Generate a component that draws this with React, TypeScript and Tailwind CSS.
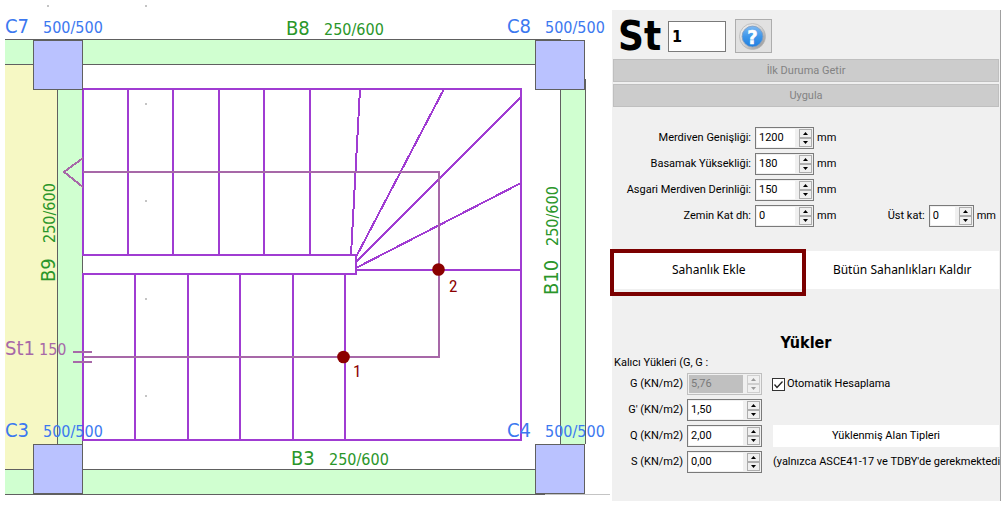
import { useId, useState } from 'react';

const BEAM = '#d0ffd0';
const OUTLINE = '#606060';
const STAIR = '#a03cd2';
const PATH = '#a768a8';

const columns = [
  { x: 33, y: 40 },
  { x: 535, y: 40 },
  { x: 33, y: 444 },
  { x: 535, y: 444 },
];

const columnLabels = [
  { name: 'C7', x: 5, y: 33 },
  { name: 'C8', x: 507, y: 33 },
  { name: 'C3', x: 5, y: 437 },
  { name: 'C4', x: 507, y: 437 },
];

const gridDots = [
  [48, 6],
  [146, 6],
  [146, 104],
  [146, 201],
  [146, 299],
  [146, 396],
];

function Plan() {
  return (
    <svg viewBox="0 0 612 507" className="block w-full font-['DejaVu_Sans_Condensed','DejaVu_Sans',sans-serif] font-stretch-condensed" role="img">
      {/* slab and beams */}
      <g shapeRendering="crispEdges">
        <rect x="5" y="65" width="53" height="405" fill="#f6f8c4" />
        <rect x="58" y="65" width="25" height="405" fill={BEAM} />
        <rect x="83" y="65" width="477" height="405" fill="#fff" />
        <rect x="561" y="80" width="24" height="364" fill={BEAM} />
        <rect x="5" y="40" width="555" height="24" fill={BEAM} />
        <rect x="5" y="470" width="539" height="24" fill={BEAM} />
        <path
          d="M5 39.5H561M5 64.5H535M57.5 89V444M82.5 89V444M560.5 89V444M585.5 79V444M5 469.5H535M5 494.5H545"
          stroke={OUTLINE}
          fill="none"
        />
        <path d="M545 494.5H610" stroke="#c4c4c4" />
        {gridDots.map(([x, y]) => (
          <rect key={`${x}-${y}`} x={x - 1} y={y - 1} width="2" height="2" fill="#c4c4c4" />
        ))}
      </g>

      {/* stair */}
      <g stroke={STAIR} strokeWidth="2" fill="none" shapeRendering="crispEdges">
        <path d="M83 255V89H521V440H83V274" />
        <path d="M82 255H356V274H82" />
        <path d="M128 89V255M173 89V255M219 89V255M264 89V255M310 89V255" />
        <path d="M135 274V440M188 274V440M240 274V440M293 274V440M345 274V440" />
        <path d="M356 270H521" />
        <path d="M360 89L351 255M444 89L356 257M521 97L356 262M521 183L356 268" />
      </g>

      {/* walking line */}
      <g stroke={PATH} strokeWidth="2" fill="none" shapeRendering="crispEdges">
        <path d="M83 172H439V357H83" />
        <path d="M83 158L64 172L83 187" />
        <path d="M73 352H92M73 362H92" />
      </g>

      <g fill="#bac2ff" stroke={OUTLINE} shapeRendering="crispEdges">
        {columns.map((c) => (
          <rect key={`${c.x}-${c.y}`} x={c.x + 0.5} y={c.y + 0.5} width="49" height="49" />
        ))}
      </g>

      <g fill="#3c78f0">
        {columnLabels.map((c) => (
          <g key={c.name}>
            <text x={c.x} y={c.y} fontSize="20">{c.name}</text>
            <text x={c.x + 38} y={c.y} fontSize="16">500/500</text>
          </g>
        ))}
      </g>

      <g fill="#2a962a">
        <text x="286" y="35" fontSize="20">B8</text>
        <text x="324" y="35" fontSize="16">250/600</text>
        <text x="291" y="465" fontSize="20">B3</text>
        <text x="329" y="465" fontSize="16">250/600</text>
        <g transform="translate(55 282) rotate(-90)">
          <text fontSize="20">B9</text>
          <text x="39" fontSize="16">250/600</text>
        </g>
        <g transform="translate(558 295) rotate(-90)">
          <text fontSize="20">B10</text>
          <text x="49" fontSize="16">250/600</text>
        </g>
      </g>

      <g fill={PATH}>
        <text x="5" y="355" fontSize="20">St1</text>
        <text x="39" y="355" fontSize="16">150</text>
      </g>

      {/* landing points */}
      <g fill="#8b0000" className="font-[Roboto,sans-serif]" fontSize="17">
        <circle cx="438.5" cy="269.5" r="6.3" />
        <text x="449" y="292">2</text>
        <circle cx="343.5" cy="357" r="6.3" />
        <text x="353" y="377">1</text>
      </g>
    </svg>
  );
}

function HelpIcon() {
  return (
    <svg width="29" height="29" viewBox="0 0 29 29" aria-hidden="true">
      <defs>
        <linearGradient id="ring" x1="0" y1="0" x2="1" y2="1">
          <stop offset="0" stopColor="#f4f4f4" />
          <stop offset="0.5" stopColor="#d2d2d2" />
          <stop offset="1" stopColor="#8c8c8c" />
        </linearGradient>
        <linearGradient id="ball" x1="0" y1="0" x2="0" y2="1">
          <stop offset="0" stopColor="#7db9f2" />
          <stop offset="0.5" stopColor="#3f97ea" />
          <stop offset="1" stopColor="#1f7fe0" />
        </linearGradient>
      </defs>
      <circle cx="13.5" cy="14.5" r="13" fill="url(#ring)" stroke="#b8b8b8" strokeWidth="0.8" />
      <circle cx="13.5" cy="14.5" r="10.4" fill="url(#ball)" stroke="#7d9cc0" strokeWidth="0.8" />
      <text x="13.5" y="21.5" fontSize="20" fontWeight="bold" textAnchor="middle" fill="#fff" stroke="#fff" strokeWidth="0.5">?</text>
    </svg>
  );
}

type SpinBoxProps = {
  label: string;
  initial: string;
  labelClass: string;
  boxClass: string;
  unit?: string;
  step?: number;
  decimals?: number;
  disabled?: boolean;
};

function SpinBox({ label, initial, labelClass, boxClass, unit, step = 1, decimals = 0, disabled }: SpinBoxProps) {
  const id = useId();
  const [value, setValue] = useState(initial);

  const change = (delta: number) => {
    const next = parseFloat(value.replace(',', '.')) + delta;
    setValue(next.toFixed(decimals).replace('.', ','));
  };

  const button = `flex h-[9px] w-[13px] items-center justify-center border bg-[#f0f0f0] ${disabled ? 'border-[#cfcfcf]' : 'border-[#adadad]'}`;
  const arrow = disabled ? '#9a9a9a' : '#000';

  return (
    <div className="flex items-center">
      <label htmlFor={id} className={`mr-1 text-right whitespace-nowrap ${labelClass}`}>{label}</label>
      <div className={`flex h-[22px] border bg-[#f0f0f0] p-px ${boxClass} ${disabled ? 'border-[#bfbfbf]' : 'border-[#7a7a7a]'}`}>
        <input
          id={id}
          value={value}
          disabled={disabled}
          onChange={(e) => setValue(e.target.value)}
          className="mr-1 min-w-0 flex-1 bg-white pl-0.5 outline-none disabled:bg-[#c0c0c0] disabled:text-[#7a7a7a]"
        />
        <div className="flex flex-col">
          <button type="button" aria-label="+" disabled={disabled} onClick={() => change(step)} className={button}>
            <svg width="5" height="3" viewBox="0 0 5 3"><path d="M0 3L2.5 0L5 3Z" fill={arrow} /></svg>
          </button>
          <button type="button" aria-label="-" disabled={disabled} onClick={() => change(-step)} className={button}>
            <svg width="5" height="3" viewBox="0 0 5 3"><path d="M0 0L2.5 3L5 0Z" fill={arrow} /></svg>
          </button>
        </div>
      </div>
      {unit && <span className="ml-[3px]">{unit}</span>}
    </div>
  );
}

const dimensions = [
  { label: 'Merdiven Genişliği:', value: '1200' },
  { label: 'Basamak Yüksekliği:', value: '180' },
  { label: 'Asgari Merdiven Derinliği:', value: '150' },
  { label: 'Zemin Kat dh:', value: '0' },
];

export default function App() {
  const [name, setName] = useState('1');
  const [auto, setAuto] = useState(true);
  const load = { labelClass: 'w-[71px]', boxClass: 'w-[75px]', step: 0.5, decimals: 2 };

  return (
    <div className="flex items-start bg-white pr-1.5 font-[Roboto,sans-serif] text-[11px] leading-4 text-black">
      <main className="min-w-0 flex-1">
        <Plan />
      </main>

      <aside className="mt-[10px] w-[389px] shrink-0 border-r border-[#a0a0a0] bg-[#f0f0f0] pt-[9px] pb-7">
        <div className="flex h-[34px] items-center pl-1.5 font-['DejaVu_Sans_Condensed','DejaVu_Sans',sans-serif] font-stretch-condensed">
          <label htmlFor="stair-name" className="w-[50px] text-[40px] font-bold">St</label>
          <input
            id="stair-name"
            value={name}
            onChange={(e) => setName(e.target.value)}
            className="h-[31px] w-[58px] border border-[#7a7a7a] bg-white px-[3px] text-base font-bold outline-none"
          />
          <button type="button" aria-label="?" className="ml-[9px] flex h-[34px] w-[37px] items-center justify-center border border-[#adadad] bg-[#e1e1e1]">
            <HelpIcon />
          </button>
        </div>

        <div className="mt-1.5 flex flex-col gap-0.5 px-px">
          <button type="button" disabled className="h-[23px] border border-[#bfbfbf] bg-[#cccccc] text-[#838383]">İlk Duruma Getir</button>
          <button type="button" disabled className="h-[23px] border border-[#bfbfbf] bg-[#cccccc] text-[#838383]">Uygula</button>
        </div>

        <div className="mt-5 flex items-end justify-between pr-1">
          <div className="flex flex-col gap-1">
            {dimensions.map((d) => (
              <SpinBox key={d.label} label={d.label} initial={d.value} unit="mm" labelClass="w-[139px]" boxClass="w-[59px]" />
            ))}
          </div>
          <SpinBox label="Üst kat:" initial="0" unit="mm" labelClass="" boxClass="w-[45px]" />
        </div>

        <div className="mt-6 grid h-[38px] grid-cols-2 pr-px font-['Noto_Sans',sans-serif] text-xs">
          <div className="relative">
            <button type="button" className="h-full w-full bg-white">Sahanlık Ekle</button>
            <div className="pointer-events-none absolute -top-0.5 right-0 -bottom-[7px] -left-0.5 border-4 border-[#7b0000]" />
          </div>
          <button type="button" className="bg-white">Bütün Sahanlıkları Kaldır</button>
        </div>

        <h2 className="mt-[42px] text-center font-['DejaVu_Sans_Condensed','DejaVu_Sans',sans-serif] text-base leading-6 font-bold font-stretch-condensed">Yükler</h2>

        <p className="mb-0.5 pl-0.5">Kalıcı Yükleri (G, G :</p>
        <div className="flex flex-col gap-1">
          <div className="flex items-center gap-[10px]">
            <SpinBox label="G (KN/m2)" initial="5,76" disabled {...load} />
            <label className="flex items-center gap-0.5">
              <span className="relative flex">
                <input
                  type="checkbox"
                  checked={auto}
                  onChange={(e) => setAuto(e.target.checked)}
                  className="peer h-[13px] w-[13px] appearance-none border border-[#333] bg-white"
                />
                <svg viewBox="0 0 13 13" className="pointer-events-none absolute inset-0 hidden peer-checked:block">
                  <path d="M2.5 6.5L5 9.5L10.5 3.5" fill="none" stroke="#222" strokeWidth="1.3" />
                </svg>
              </span>
              Otomatik Hesaplama
            </label>
          </div>
          <SpinBox label="G' (KN/m2)" initial="1,50" {...load} />
          <div className="flex items-center gap-[11px] pr-px">
            <SpinBox label="Q (KN/m2)" initial="2,00" {...load} />
            <button type="button" className="h-[22px] flex-1 bg-white">Yüklenmiş Alan Tipleri</button>
          </div>
          <div className="flex items-center gap-[11px]">
            <SpinBox label="S (KN/m2)" initial="0,00" {...load} />
            <p className="min-w-0 flex-1 whitespace-nowrap">(yalnızca ASCE41-17 ve TDBY'de gerekmektedi</p>
          </div>
        </div>
      </aside>
    </div>
  );
}
